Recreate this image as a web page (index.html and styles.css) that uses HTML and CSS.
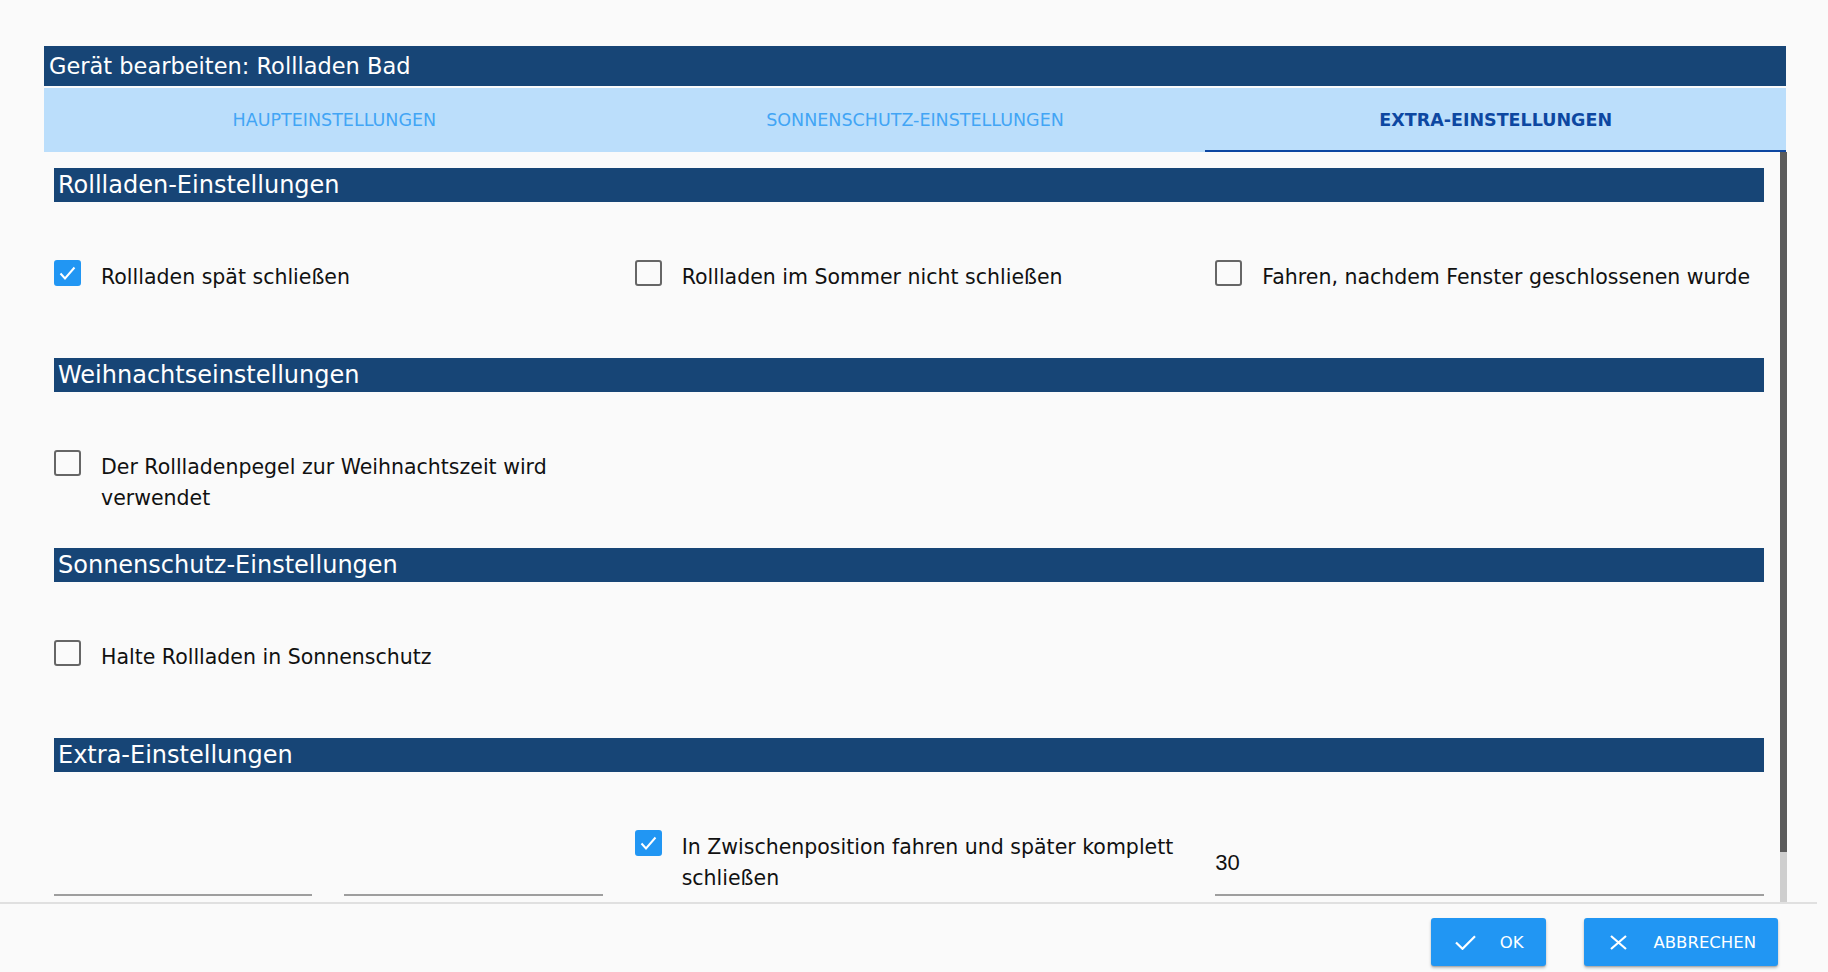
FILE: index.html
```html
<!DOCTYPE html>
<html lang="de">
<head>
<meta charset="utf-8">
<title>Gerät bearbeiten: Rollladen Bad</title>
<link rel="stylesheet" href="styles.css">
</head>
<body>
<div class="page">
  <div class="dialog">
    <div class="dialog-title">Gerät bearbeiten: Rollladen Bad</div>
    <div class="tabs">
      <div class="tab">HAUPTEINSTELLUNGEN</div>
      <div class="tab">SONNENSCHUTZ-EINSTELLUNGEN</div>
      <div class="tab active">EXTRA-EINSTELLUNGEN</div>
    </div>
    <div class="body-row">
      <div class="content">
        <section class="section">
          <h2 class="section-header">Rollladen-Einstellungen</h2>
          <div class="section-body grid">
            <label class="check-item">
              <span class="box checked"><svg viewBox="0 0 27 26" width="27" height="26"><polyline points="6.5,13.5 11,18.5 20.5,7.5" fill="none" stroke="#fff" stroke-width="2"/></svg></span>
              <span class="label">Rollladen spät schließen</span>
            </label>
            <label class="check-item">
              <span class="box"></span>
              <span class="label">Rollladen im Sommer nicht schließen</span>
            </label>
            <label class="check-item">
              <span class="box"></span>
              <span class="label">Fahren, nachdem Fenster geschlossenen wurde</span>
            </label>
          </div>
        </section>
        <section class="section">
          <h2 class="section-header">Weihnachtseinstellungen</h2>
          <div class="section-body grid">
            <label class="check-item">
              <span class="box"></span>
              <span class="label">Der Rollladenpegel zur Weihnachtszeit wird verwendet</span>
            </label>
          </div>
        </section>
        <section class="section">
          <h2 class="section-header">Sonnenschutz-Einstellungen</h2>
          <div class="section-body grid">
            <label class="check-item">
              <span class="box"></span>
              <span class="label">Halte Rollladen in Sonnenschutz</span>
            </label>
          </div>
        </section>
        <section class="section">
          <h2 class="section-header">Extra-Einstellungen</h2>
          <div class="section-body grid">
            <div class="subgrid">
              <div class="field"></div>
              <div class="field"></div>
            </div>
            <label class="check-item">
              <span class="box checked"><svg viewBox="0 0 27 26" width="27" height="26"><polyline points="6.5,13.5 11,18.5 20.5,7.5" fill="none" stroke="#fff" stroke-width="2"/></svg></span>
              <span class="label">In Zwischenposition fahren und später komplett schließen</span>
            </label>
            <div class="field">30</div>
          </div>
        </section>
      </div>
      <div class="scrollbar">
        <div class="thumb"></div>
        <div class="track"></div>
      </div>
    </div>
  </div>
  <div class="footer">
    <button class="btn btn-ok">
      <svg class="icon" viewBox="0 0 21 15" width="21" height="15"><polyline points="1,7.5 7.5,13.8 20,1.2" fill="none" stroke="#fff" stroke-width="2.2"/></svg>
      <span>OK</span>
    </button>
    <button class="btn btn-cancel">
      <svg class="icon" viewBox="0 0 17 15" width="17" height="15"><path d="M1 1 L16 14 M16 1 L1 14" fill="none" stroke="#fff" stroke-width="2.2"/></svg>
      <span>ABBRECHEN</span>
    </button>
  </div>
</div>
</body>
</html>
```

FILE: styles.css
```css
html, body {
  margin: 0;
  padding: 0;
  background: #fafafa;
  font-family: "DejaVu Sans", "Liberation Sans", sans-serif;
}

.page {
  width: 1828px;
  height: 972px;
  padding-top: 46px;
  box-sizing: border-box;
  overflow: hidden;
}

.dialog {
  margin-left: 44px;
  width: 1743px;
}

.dialog-title {
  margin-right: 1px;
  height: 40px;
  line-height: 40px;
  padding-left: 5px;
  background: #174576;
  color: #ffffff;
  font-size: 22.5px;
  white-space: nowrap;
}

.tabs {
  margin-top: 2px;
  margin-right: 1px;
  height: 64px;
  display: flex;
  background: #bbdefb;
}

.tab {
  flex: 1 1 0;
  display: flex;
  align-items: center;
  justify-content: center;
  font-size: 17.5px;
  color: #42a5f5;
  box-sizing: border-box;
  white-space: nowrap;
}

.tab.active {
  color: #0d47a1;
  font-weight: bold;
  box-shadow: inset 0 -2px 0 #0d47a1;
}

.body-row {
  display: flex;
  height: 750px;
}

.content {
  flex: 1 1 auto;
  min-width: 0;
  overflow: hidden;
  box-sizing: border-box;
  padding: 16px 16px 28px 10px;
}

.scrollbar {
  flex: none;
  width: 7px;
  display: flex;
  flex-direction: column;
}

.thumb {
  height: 700px;
  background: #5b5b5b;
}

.track {
  flex: 1 1 auto;
  background: #cecece;
}

.section {
  height: 190px;
}

.section-header {
  margin: 0;
  height: 34px;
  line-height: 34px;
  padding-left: 4px;
  background: #174576;
  color: #ffffff;
  font-size: 24px;
  font-weight: normal;
  white-space: nowrap;
}

.section-body {
  padding-top: 58px;
}

.grid {
  display: grid;
  grid-template-columns: repeat(3, 1fr);
  column-gap: 32px;
  align-items: start;
}

.subgrid {
  display: grid;
  grid-template-columns: 1fr 1fr;
  column-gap: 32px;
}

.check-item {
  display: flex;
  align-items: flex-start;
}

.box {
  flex: none;
  width: 27px;
  height: 26px;
  box-sizing: border-box;
  border: 2px solid #666666;
  border-radius: 3px;
  margin-right: 20px;
  position: relative;
}

.box.checked {
  background: #2196f3;
  border-color: #2196f3;
}

.box svg {
  position: absolute;
  left: -2px;
  top: -2px;
}

.label {
  margin-top: 2px;
  font-size: 20.5px;
  line-height: 31px;
  color: #111111;
}

.field {
  box-sizing: border-box;
  height: 66px;
  padding-top: 20px;
  line-height: 26px;
  border-bottom: 2px solid #9e9e9e;
  font-family: "Liberation Sans", Arial, sans-serif;
  font-size: 22px;
  color: #111111;
}

.footer {
  margin-right: 11px;
  border-top: 2px solid #e0e0e0;
  display: flex;
  justify-content: flex-end;
  gap: 38px;
  padding: 14px 39px 0 0;
}

.btn {
  height: 48px;
  display: flex;
  align-items: center;
  border: none;
  border-radius: 3px;
  background: #2196f3;
  color: #ffffff;
  font-family: "DejaVu Sans", "Liberation Sans", sans-serif;
  font-size: 16.5px;
  box-shadow: 0 2px 3px rgba(0, 0, 0, 0.25), 0 1px 1px rgba(0, 0, 0, 0.12);
  cursor: pointer;
}

.btn-ok {
  padding: 0 23px 0 24px;
  gap: 24px;
}

.btn-cancel {
  padding: 0 22px 0 26px;
  gap: 26px;
}

.icon {
  flex: none;
  display: block;
}
```
